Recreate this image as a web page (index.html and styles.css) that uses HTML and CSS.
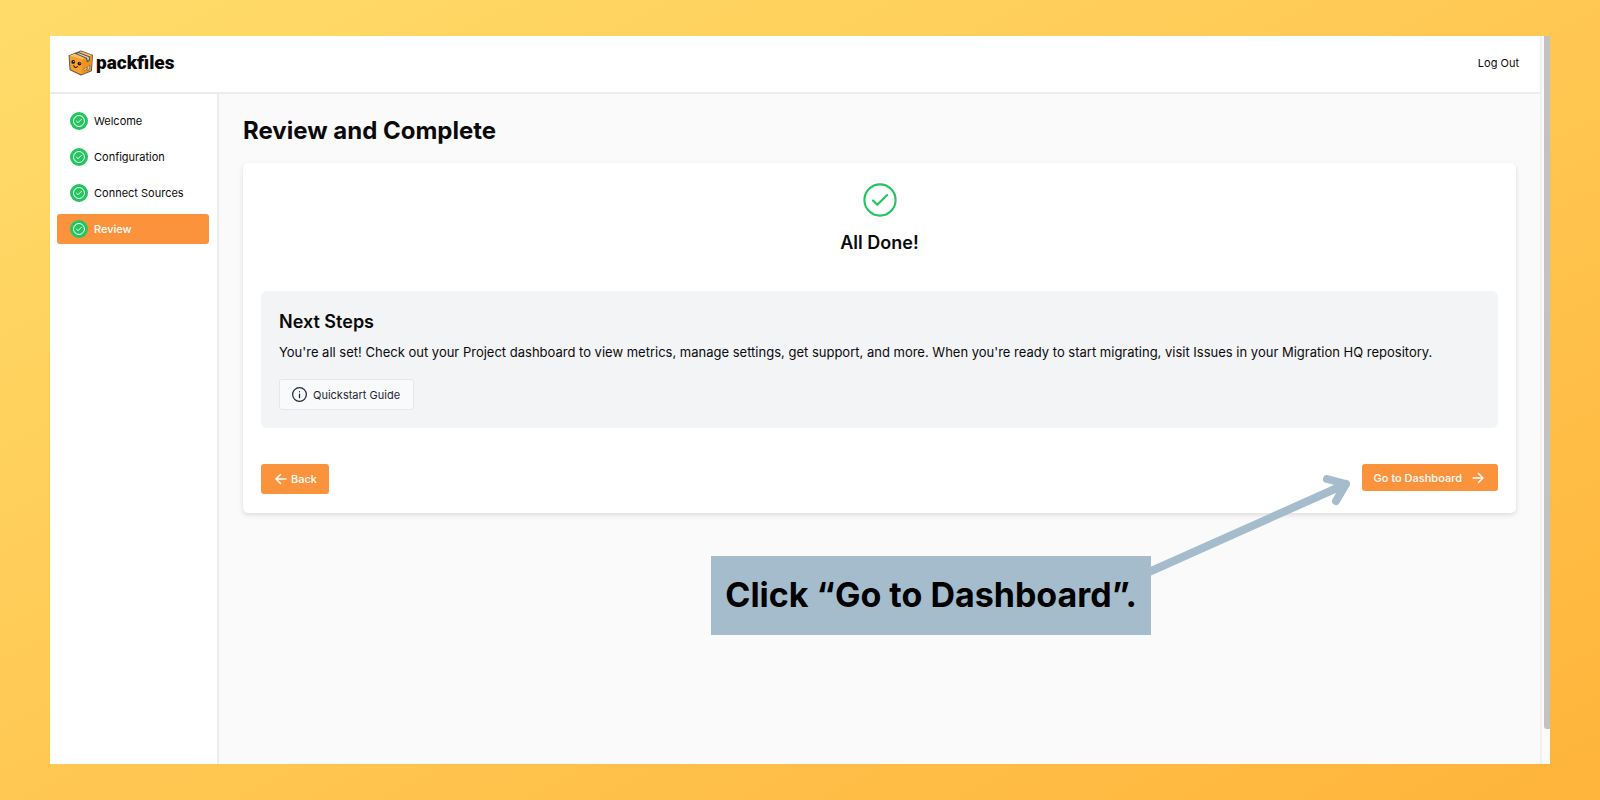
FILE: index.html
```
<!DOCTYPE html>
<html lang="en">
<head>
<meta charset="utf-8">
<title>Packfiles – Review and Complete</title>
<link rel="stylesheet" href="styles.css">
</head>
<body>
<svg class="defs" aria-hidden="true">
  <symbol id="check-circle" viewBox="0 0 24 24" fill="none" stroke="currentColor" stroke-linecap="round" stroke-linejoin="round">
    <circle cx="12" cy="12" r="11"/>
    <path d="M7 12.4 10.1 15.4 17 8.5"/>
  </symbol>
</svg>
<div class="window">
  <div class="app">
    <header class="header">
      <a class="brand" href="#">
        <svg class="brand-icon" viewBox="0 0 50 50" aria-hidden="true">
          <path d="M3 11 26 2 48 10 46 40 26 48 5 38Z" fill="#f9a127" stroke="#5d5a5c" stroke-width="2" stroke-linejoin="round"/>
          <path d="M4 11 26 3 47 10 29 18Z" fill="#ffc062"/>
          <path d="M29 18 47 10 45 39 27 47Z" fill="#f0921d"/>
          <path d="M16 7 21 5 42 13 42 20 38 22 37 16Z" fill="#d9d5cf" stroke="#4b4a4f" stroke-width="2"/>
          <circle cx="11" cy="23" r="3.6" fill="#1e1715"/>
          <circle cx="23" cy="26" r="3.6" fill="#1e1715"/>
          <circle cx="12" cy="22" r="1" fill="#fff"/>
          <circle cx="24" cy="25" r="1" fill="#fff"/>
          <path d="M12 30q2 6 7 2" fill="none" stroke="#2a1a10" stroke-width="2" stroke-linecap="round"/>
          <path d="M31 37 36 33 38 36 33 40ZM38 32 43 29 42 37 38 40Z" fill="#d9c8a8" stroke="#7c5a2a" stroke-width="1"/>
        </svg>
        <span>packfiles</span>
      </a>
      <a class="logout" href="#">Log Out</a>
    </header>
    <div class="body">
      <nav class="sidebar" aria-label="Setup steps">
        <a class="step" href="#"><span class="badge"><svg><use href="#check-circle"/></svg></span>Welcome</a>
        <a class="step" href="#"><span class="badge"><svg><use href="#check-circle"/></svg></span>Configuration</a>
        <a class="step" href="#"><span class="badge"><svg><use href="#check-circle"/></svg></span>Connect Sources</a>
        <a class="step active" href="#" aria-current="step"><span class="badge"><svg><use href="#check-circle"/></svg></span>Review</a>
      </nav>
      <main class="main">
        <h1>Review and Complete</h1>
        <section class="card">
          <div class="done">
            <svg class="done-icon" aria-hidden="true"><use href="#check-circle"/></svg>
            <h2>All Done!</h2>
          </div>
          <div class="next">
            <h2>Next Steps</h2>
            <p>You're all set! Check out your Project dashboard to view metrics, manage settings, get support, and more. When you're ready to start migrating, visit Issues in your Migration HQ repository.</p>
            <a class="guide" href="#">
              <svg viewBox="0 0 24 24" fill="none" stroke="currentColor" stroke-width="2" stroke-linecap="round" aria-hidden="true"><circle cx="12" cy="12" r="11"/><path d="M12 11.500V17M12 7.500v.1"/></svg>
              Quickstart Guide
            </a>
          </div>
          <div class="actions">
            <button class="btn back" type="button">
              <svg viewBox="0 0 24 24" aria-hidden="true"><path d="M22 12H2M11 3 2 12l9 9"/></svg>Back
            </button>
            <button class="btn go" type="button">
              Go to Dashboard<svg viewBox="0 0 24 24" aria-hidden="true"><path d="M2 12h20M13 3l9 9-9 9"/></svg>
            </button>
          </div>
        </section>
      </main>
    </div>
  </div>
  <div class="scrollbar"><div class="thumb"></div></div>
  <svg class="arrow" viewBox="0 0 210 110" aria-hidden="true"><path d="M2 100 199 12M180 7 199 12 189 29"/></svg>
  <div class="callout">Click “Go to Dashboard”.</div>
</div>
</body>
</html>
```
FILE: styles.css
```
* { box-sizing: border-box; }

body {
  margin: 0;
  min-height: 100vh;
  display: flex;
  padding: 36px 50px;
  background: linear-gradient(to bottom right, #ffdc6a, #ffb43b);
  font-family: Inter, "Liberation Sans", sans-serif;
  font-size: 11px;
  line-height: 18px;
  color: #0a0a0a;
}

h1, h2, p { margin: 0; }
a { color: inherit; text-decoration: none; }
.defs { position: absolute; width: 0; height: 0; }

.window {
  position: relative;
  flex: 1;
  display: flex;
  background: #fafafa;
}

.app {
  flex: 1;
  display: flex;
  flex-direction: column;
  border-right: 2px solid #f0f0f1;
}

.header {
  display: flex;
  align-items: center;
  justify-content: space-between;
  height: 58px;
  padding: 0 21px 3px 17px;
  background: #fff;
  border-bottom: 2px solid #ececed;
}

.brand {
  display: flex;
  align-items: center;
  gap: 2px;
  font-family: Roboto, sans-serif;
  font-size: 19px;
  font-weight: 900;
}
.brand-icon { width: 27px; height: 26px; }

.body { flex: 1; display: flex; }

.sidebar {
  width: 169px;
  padding: 12px 8px 12px 7px;
  display: flex;
  flex-direction: column;
  gap: 6px;
  background: #fff;
  border-right: 2px solid #ececed;
}

.step {
  display: flex;
  align-items: center;
  gap: 6px;
  height: 30px;
  padding: 0 13px;
  border-radius: 3px;
}
.step.active { background: #fb923c; color: #fff; font-weight: 500; }

.badge {
  display: flex;
  align-items: center;
  justify-content: center;
  width: 18px;
  height: 18px;
  border-radius: 50%;
  background: #22c55e;
  color: #fff;
}
.badge svg { width: 12px; height: 12px; stroke-width: 2px; }

.main { flex: 1; padding: 19px 24px; }
h1 { font-size: 24px; line-height: 36px; font-weight: 700; }

.card {
  margin-top: 14px;
  padding: 20px 18px 18px;
  background: #fff;
  border-radius: 5px;
  box-shadow: 0 2px 5px rgba(0, 0, 0, 0.12);
}

.done {
  display: flex;
  flex-direction: column;
  align-items: center;
  gap: 13px;
}
.done-icon { width: 34px; height: 34px; color: #22c55e; stroke-width: 1.500px; }
h2 { font-size: 18px; line-height: 26px; font-weight: 600; }

.next {
  margin-top: 35px;
  padding: 18px;
  background: #f3f4f6;
  border-radius: 6px;
}
.next p { margin-top: 7px; font-size: 13px; line-height: 20px; }

.guide {
  display: inline-flex;
  align-items: center;
  gap: 6px;
  height: 31px;
  margin-top: 17px;
  padding: 0 13px 0 12px;
  background: #f9fafb;
  border: 1px solid #e5e7eb;
  border-radius: 3px;
  color: #1f2937;
}
.guide svg { width: 15px; height: 15px; }

.actions {
  display: flex;
  align-items: flex-start;
  justify-content: space-between;
  margin-top: 36px;
}

.btn {
  display: inline-flex;
  align-items: center;
  border: 0;
  border-radius: 3px;
  background: #fb923c;
  color: #fff;
  font: 500 11px/18px Inter, "Liberation Sans", sans-serif;
}
.btn svg {
  width: 12px;
  height: 12px;
  fill: none;
  stroke: currentColor;
  stroke-width: 3px;
  stroke-linecap: round;
  stroke-linejoin: round;
}
.back { height: 30px; margin-bottom: 1px; padding: 0 12px 0 14px; gap: 4px; }
.go { height: 27px; padding: 0 14px 0 12px; gap: 10px; }

.scrollbar { width: 8px; padding-left: 2px; }
.thumb {
  height: calc(100% - 35px);
  background: #c2c2c2;
  border-radius: 0 0 0 3px;
}

.arrow {
  position: absolute;
  top: 436px;
  right: 193px;
  width: 210px;
  height: 110px;
  fill: none;
  stroke: #a5bccd;
  stroke-width: 8px;
  stroke-linecap: round;
  stroke-linejoin: round;
}

.callout {
  position: absolute;
  top: 520px;
  right: 399px;
  width: 440px;
  padding: 14px 0 16px;
  background: #a5bccd;
  color: #000;
  font-size: 34px;
  line-height: 49px;
  font-weight: 700;
  text-align: center;
  white-space: nowrap;
}
```
